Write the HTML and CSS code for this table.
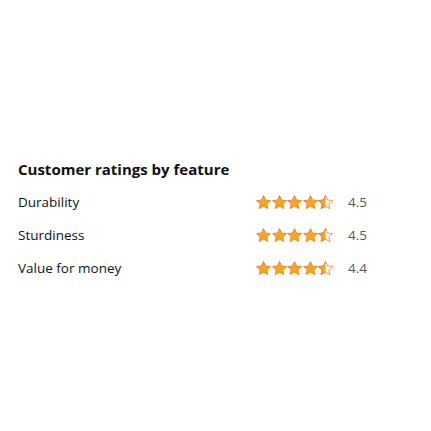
FILE: index.html
```html
<!DOCTYPE html>
<html>
<head>
<meta charset="utf-8">
<link rel="stylesheet" href="styles.css">
</head>
<body>
<svg width="0" height="0" class="defs">
  <defs>
    <clipPath id="halfclip"><rect x="0" y="0" width="12" height="23"/></clipPath>
    <symbol id="star" viewBox="1 0.4 22 20.8" preserveAspectRatio="none">
      <path d="M12 1.2l3.1 6.6 7.2.8-5.4 4.9 1.5 7.1L12 17l-6.4 3.6 1.5-7.1L1.7 8.6l7.2-.8z" fill="#FFA41C" stroke="#DE7921" stroke-width="1.1" stroke-linejoin="round"/>
    </symbol>
    <symbol id="half" viewBox="1 0.4 22 20.8" preserveAspectRatio="none">
      <path d="M12 1.2l3.1 6.6 7.2.8-5.4 4.9 1.5 7.1L12 17l-6.4 3.6 1.5-7.1L1.7 8.6l7.2-.8z" fill="#fff" stroke="#DE7921" stroke-width="1.1" stroke-linejoin="round"/>
      <path clip-path="url(#halfclip)" d="M12 1.2l3.1 6.6 7.2.8-5.4 4.9 1.5 7.1L12 17l-6.4 3.6 1.5-7.1L1.7 8.6l7.2-.8z" fill="#FFA41C" stroke="#DE7921" stroke-width="1.1" stroke-linejoin="round"/>
    </symbol>
  </defs>
</svg>
<section class="ratings">
  <h2 class="title">Customer ratings by feature</h2>
  <div class="row">
    <span class="label">Durability</span>
    <span class="stars">
      <svg class="star"><use href="#star"/></svg><svg class="star"><use href="#star"/></svg><svg class="star"><use href="#star"/></svg><svg class="star"><use href="#star"/></svg><svg class="star"><use href="#half"/></svg>
    </span>
    <span class="score">4.5</span>
  </div>
  <div class="row">
    <span class="label">Sturdiness</span>
    <span class="stars">
      <svg class="star"><use href="#star"/></svg><svg class="star"><use href="#star"/></svg><svg class="star"><use href="#star"/></svg><svg class="star"><use href="#star"/></svg><svg class="star"><use href="#half"/></svg>
    </span>
    <span class="score">4.5</span>
  </div>
  <div class="row">
    <span class="label">Value for money</span>
    <span class="stars">
      <svg class="star"><use href="#star"/></svg><svg class="star"><use href="#star"/></svg><svg class="star"><use href="#star"/></svg><svg class="star"><use href="#star"/></svg><svg class="star"><use href="#half"/></svg>
    </span>
    <span class="score">4.4</span>
  </div>
</section>
</body>
</html>
```
FILE: styles.css
```css
html, body {
  margin: 0;
  padding: 0;
  background: #fff;
}
body {
  font-family: "Open Sans", "Noto Sans", sans-serif;
  color: #0F1111;
}
.defs {
  position: absolute;
  width: 0;
  height: 0;
}
.ratings {
  padding: 159px 18px 0 18px;
}
.title {
  margin: 0 0 6px 0;
  font-size: 15px;
  font-weight: 700;
  line-height: 20px;
}
.row {
  display: grid;
  grid-template-columns: 238px 77px auto;
  align-items: center;
  height: 33px;
  font-size: 13.5px;
  font-weight: 400;
}
.label {
  color: #0F1111;
}
.stars {
  display: flex;
  gap: 0.5px;
  align-items: center;
}
.star {
  width: 15px;
  height: 14px;
  display: block;
}
.score {
  margin-left: 15px;
  color: #565959;
}
```
